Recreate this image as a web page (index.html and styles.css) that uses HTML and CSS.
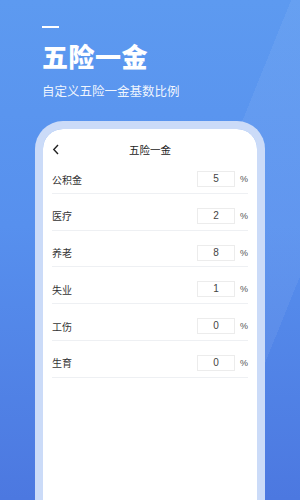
FILE: index.html
```html
<!DOCTYPE html>
<html lang="zh-CN">
<head>
  <meta charset="UTF-8">
  <meta name="viewport" content="width=device-width, initial-scale=1.0">
  <title>五险一金</title>
  <link rel="stylesheet" href="styles.css">
</head>
<body>
  <div class="screen">
    <div class="hero">
      <div class="dash"></div>
      <h1>五险一金</h1>
      <p class="subtitle">自定义五险一金基数比例</p>
    </div>

    <div class="phone">
      <div class="phone-inner">
        <div class="nav">
          <svg class="back" width="8" height="11" viewBox="0 0 8 11">
            <path d="M6 1 L1.8 5.5 L6 10" fill="none" stroke="#222" stroke-width="1.4"/>
          </svg>
          <span class="nav-title">五险一金</span>
        </div>

        <div class="row">
          <span class="label">公积金</span>
          <span class="box">5</span>
          <span class="pct">%</span>
        </div>
        <div class="row">
          <span class="label">医疗</span>
          <span class="box">2</span>
          <span class="pct">%</span>
        </div>
        <div class="row">
          <span class="label">养老</span>
          <span class="box">8</span>
          <span class="pct">%</span>
        </div>
        <div class="row">
          <span class="label">失业</span>
          <span class="box">1</span>
          <span class="pct">%</span>
        </div>
        <div class="row">
          <span class="label">工伤</span>
          <span class="box">0</span>
          <span class="pct">%</span>
        </div>
        <div class="row">
          <span class="label">生育</span>
          <span class="box">0</span>
          <span class="pct">%</span>
        </div>
      </div>
    </div>
  </div>
</body>
</html>
```

FILE: styles.css
```css
body {
  margin: 0;
  padding: 0;
  font-family: "Noto Sans CJK SC", "Noto Sans", sans-serif;
}
.screen {
  width: 300px;
  height: 500px;
  overflow: hidden;
  display: flex;
  flex-direction: column;
  background:
    linear-gradient(112deg, rgba(255, 255, 255, 0) 58%, rgba(255, 255, 255, 0.06) 58%, rgba(255, 255, 255, 0.06) 82%, rgba(255, 255, 255, 0) 82%),
    linear-gradient(180deg, #5d9af0 0%, #5790ee 45%, #4c78e0 100%);
}
.hero {
  padding: 26px 42px 0;
  color: white;
}
.dash {
  width: 17px;
  height: 2px;
  background-color: white;
}
h1 {
  margin: 12px 0 0;
  font-size: 26px;
  line-height: 32px;
  font-weight: 900;
  letter-spacing: 0.5px;
}
.subtitle {
  margin: 11px 0 0;
  font-size: 12.5px;
  line-height: 16px;
  color: rgba(255, 255, 255, 0.92);
}
.phone {
  margin: 22px 35px 0;
  flex: 1;
  border: 8px solid #cbdbf8;
  border-bottom: none;
  border-radius: 28px 28px 0 0;
}
.phone-inner {
  height: 100%;
  background-color: white;
  border-radius: 20px 20px 0 0;
  padding: 13px 9px 0;
}
.nav {
  position: relative;
  height: 15px;
  display: flex;
  align-items: center;
  justify-content: center;
}
.back {
  position: absolute;
  left: 0;
  top: 2px;
}
.nav-title {
  font-size: 10.5px;
  color: #222;
}
.row {
  display: flex;
  align-items: center;
  height: 16px;
  padding: 14px 0 5.8px;
  border-bottom: 1px solid #eef0f3;
}
.label {
  flex: 1;
  font-size: 10px;
  color: #333;
}
.box {
  width: 36px;
  height: 14px;
  border: 1px solid #ececec;
  font-family: "Liberation Sans", Arial, sans-serif;
  font-size: 10px;
  line-height: 14px;
  text-align: center;
  color: #444;
}
.pct {
  width: 13px;
  text-align: right;
  font-family: "Liberation Sans", Arial, sans-serif;
  font-size: 9px;
  color: #555;
}
```
